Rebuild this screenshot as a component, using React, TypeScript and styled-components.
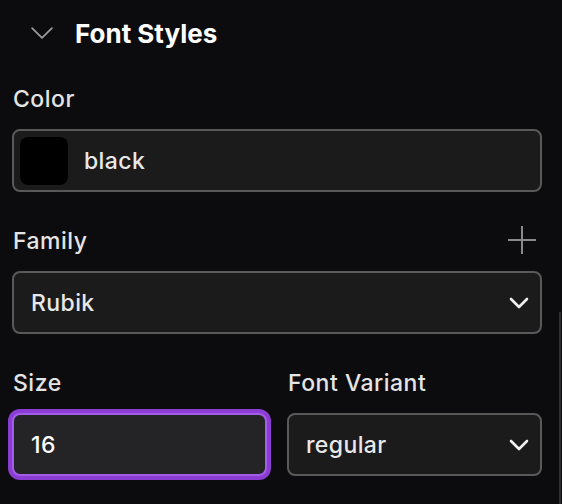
import React, { useState } from "react";
import styled, { createGlobalStyle } from "styled-components";

const GlobalStyle = createGlobalStyle`
  html, body {
    margin: 0;
    padding: 0;
    background: #0c0c0e;
  }
  body {
    font-family: Inter, "Open Sans", sans-serif;
    color: #e6e6e6;
  }
`;

const Panel = styled.div`
  position: relative;
  width: 562px;
  height: 504px;
  box-sizing: border-box;
  padding: 14px 20px 0 12px;
  overflow: hidden;
  background: #0c0c0e;
`;

const Header = styled.div`
  display: flex;
  align-items: center;
  height: 38px;
  padding-left: 19px;
  gap: 22px;
  margin-bottom: 30px;
`;

const Heading = styled.h2`
  margin: 0;
  font-size: 26px;
  font-weight: 700;
  color: #ffffff;
`;

const Fields = styled.div`
  display: flex;
  flex-direction: column;
  gap: 32px;
`;

const Row = styled.div`
  display: grid;
  grid-template-columns: 1fr 1fr;
  column-gap: 20px;
`;

const Field = styled.div`
  display: flex;
  flex-direction: column;
  gap: 15px;
`;

const LabelRow = styled.div`
  display: flex;
  align-items: center;
  justify-content: space-between;
  height: 32px;
`;

const Label = styled.label`
  font-size: 23px;
  font-weight: 500;
  letter-spacing: 0.5px;
  color: #e4e4e4;
  padding-left: 1px;
  padding-top: 1px;
`;

const Box = styled.div<{ $focused?: boolean }>`
  display: flex;
  align-items: center;
  height: 63px;
  box-sizing: border-box;
  border-radius: 8px;
  border: 2px solid ${(p) => (p.$focused ? "#a25ee8" : "#595959")};
  background: ${(p) => (p.$focused ? "#242426" : "#1b1b1b")};
  box-shadow: ${(p) => (p.$focused ? "0 0 0 4px #8b3dd3" : "none")};
  padding: 0 10px 0 17px;
  font-size: 23px;
  font-weight: 500;
  letter-spacing: 0.4px;
  color: ${(p) => (p.$focused ? "#ffffff" : "#e8e8e8")};
`;

const ColorBox = styled(Box)`
  padding-left: 6px;
  gap: 16px;
`;

const Swatch = styled.div<{ $color: string }>`
  width: 48px;
  height: 48px;
  border-radius: 8px;
  background: ${(p) => p.$color};
`;

const Value = styled.span`
  flex: 1;
  padding-top: 1px;
`;

const IconButton = styled.button`
  display: flex;
  align-items: center;
  justify-content: center;
  width: 32px;
  height: 32px;
  padding: 0;
  margin-right: 4px;
  border: none;
  background: none;
  cursor: pointer;
`;

const Scrollbar = styled.div`
  position: absolute;
  right: 1px;
  top: 312px;
  bottom: 0;
  width: 2px;
  background: #2e2e30;
`;

const Chevron = ({ color, size, width }: { color: string; size: number; width: number }) => (
  <svg width={size} height={size * 0.55} viewBox="0 0 20 11" fill="none">
    <path d="M1 1l9 9 9-9" stroke={color} strokeWidth={width} strokeLinecap="round" strokeLinejoin="round" />
  </svg>
);

const SelectArrow = () => (
  <svg width="20" height="14" viewBox="0 0 20 14" fill="none" style={{ marginRight: 1 }}>
    <path d="M2 3l8 8 8-8" stroke="#f0f0f0" strokeWidth="2.6" strokeLinecap="round" strokeLinejoin="round" />
  </svg>
);

const PlusIcon = () => (
  <svg width="30" height="30" viewBox="0 0 30 30" fill="none">
    <path d="M15 1v28M1 15h28" stroke="#8a8a8a" strokeWidth="2" />
  </svg>
);

export default function App() {
  const [size] = useState("16");
  return (
    <>
      <GlobalStyle />
      <Panel>
        <Header>
          <Chevron color="#9a9a9a" size={22} width={1.6} />
          <Heading>Font Styles</Heading>
        </Header>
        <Fields>
          <Field>
            <LabelRow>
              <Label>Color</Label>
            </LabelRow>
            <ColorBox>
              <Swatch $color="#000000" />
              <Value>black</Value>
            </ColorBox>
          </Field>
          <Field>
            <LabelRow>
              <Label>Family</Label>
              <IconButton aria-label="Add family">
                <PlusIcon />
              </IconButton>
            </LabelRow>
            <Box>
              <Value>Rubik</Value>
              <SelectArrow />
            </Box>
          </Field>
          <Row>
            <Field>
              <LabelRow>
                <Label>Size</Label>
              </LabelRow>
              <Box $focused>
                <Value>{size}</Value>
              </Box>
            </Field>
            <Field>
              <LabelRow>
                <Label>Font Variant</Label>
              </LabelRow>
              <Box>
                <Value>regular</Value>
                <SelectArrow />
              </Box>
            </Field>
          </Row>
        </Fields>
        <Scrollbar />
      </Panel>
    </>
  );
}
